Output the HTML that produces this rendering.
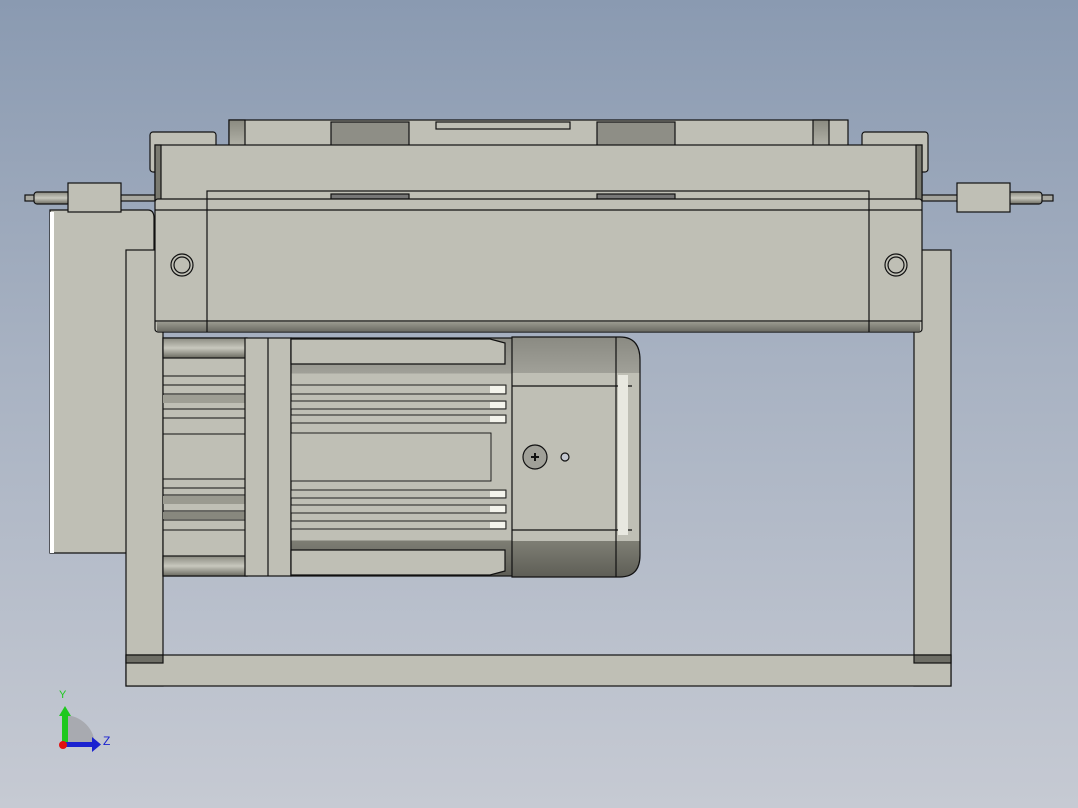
<!DOCTYPE html>
<html><head><meta charset="utf-8"><style>
html,body{margin:0;padding:0;}
body{width:1078px;height:808px;overflow:hidden;background:linear-gradient(#8a9ab1 0%,#a8b2c2 45%,#c6cad3 100%);}
svg{display:block}
</style></head><body>
<svg width="1078" height="808" viewBox="0 0 1078 808" xmlns="http://www.w3.org/2000/svg">
<defs>
<linearGradient id="cyl" x1="0" y1="0" x2="0" y2="1"><stop offset="0" stop-color="#8a8a80"/><stop offset=".5" stop-color="#c8c8be"/><stop offset="1" stop-color="#6a6a60"/></linearGradient>
<linearGradient id="cap" x1="0" y1="0" x2="0" y2="1"><stop offset="0" stop-color="#8a8a82"/><stop offset=".15" stop-color="#a0a098"/><stop offset=".15" stop-color="#bfbfb5"/><stop offset=".85" stop-color="#bfbfb5"/><stop offset=".85" stop-color="#7e7e74"/><stop offset="1" stop-color="#5e5e56"/></linearGradient>
<linearGradient id="gv" x1="0" y1="0" x2="0" y2="1"><stop offset="0" stop-color="#9a9a90"/><stop offset="1" stop-color="#6e6e66"/></linearGradient>
</defs>
<g stroke="#111" stroke-width="1.2" fill="#bfbfb5">
<!-- rods -->
<rect x="25" y="195" width="135" height="6" fill="#a8a8a0"/>
<rect x="918" y="195" width="135" height="6" fill="#a8a8a0"/>
<rect x="34" y="192" width="36" height="12" rx="3" fill="url(#cyl)"/>
<rect x="1006" y="192" width="36" height="12" rx="3" fill="url(#cyl)"/>
<!-- back panel -->
<path d="M50 210 H148 Q154 210 154 218 V553 H50 Z"/>
<rect x="50" y="212" width="4" height="341" fill="#fff" stroke="none"/>
<!-- blocks -->
<rect x="68" y="183" width="53" height="29"/>
<rect x="957" y="183" width="53" height="29"/>
<!-- legs -->
<rect x="126" y="250" width="37" height="436"/>
<rect x="914" y="250" width="37" height="436"/>
<rect x="126" y="655" width="825" height="31"/>
<rect x="126" y="655" width="37" height="8" fill="#6e6e66"/>
<rect x="914" y="655" width="37" height="8" fill="#6e6e66"/>
<!-- top rail -->
<rect x="229" y="120" width="619" height="27"/>
<rect x="229" y="120" width="16" height="80" fill="url(#cyl)"/>
<rect x="813" y="120" width="16" height="80" fill="url(#cyl)"/>
<rect x="331" y="122" width="78" height="24" fill="#8e8e86"/>
<rect x="597" y="122" width="78" height="24" fill="#8e8e86"/>
<rect x="436" y="122" width="134" height="7"/>
<!-- tabs -->
<rect x="150" y="132" width="66" height="40" rx="3"/>
<rect x="862" y="132" width="66" height="40" rx="3"/>
<!-- upper box -->
<rect x="155" y="145" width="767" height="55"/>
<rect x="155" y="145" width="6" height="55" fill="#7a7a70"/>
<rect x="916" y="145" width="6" height="55" fill="#7a7a70"/>
<rect x="207" y="191" width="662" height="9"/>
<rect x="331" y="194" width="78" height="5" fill="#777"/>
<rect x="597" y="194" width="78" height="5" fill="#777"/>
<!-- lower beam -->
<rect x="155" y="199" width="767" height="133" rx="3"/>
<line x1="155" y1="210" x2="922" y2="210"/>
<line x1="155" y1="321" x2="922" y2="321"/>
<rect x="157" y="322" width="763" height="9" fill="url(#gv)" stroke="none"/>
<line x1="207" y1="199" x2="207" y2="332"/>
<line x1="869" y1="199" x2="869" y2="332"/>
<circle cx="182" cy="265" r="11"/><circle cx="182" cy="265" r="8"/>
<circle cx="896" cy="265" r="11"/><circle cx="896" cy="265" r="8"/>
<!-- motor body -->
<rect x="163" y="338" width="84" height="238" fill="#bfbfb5"/>
<rect x="163" y="338" width="84" height="20" fill="url(#cyl)"/>
<rect x="163" y="556" width="84" height="20" fill="url(#cyl)"/>
<g stroke-width="0.9">
<line x1="163" y1="376" x2="247" y2="376"/><line x1="163" y1="385" x2="247" y2="385"/>
<line x1="163" y1="394" x2="247" y2="394"/><line x1="163" y1="409" x2="247" y2="409"/>
<line x1="163" y1="418" x2="247" y2="418"/><line x1="163" y1="434" x2="247" y2="434"/>
<line x1="163" y1="479" x2="247" y2="479"/><line x1="163" y1="488" x2="247" y2="488"/>
<line x1="163" y1="495" x2="247" y2="495"/><line x1="163" y1="511" x2="247" y2="511"/>
<line x1="163" y1="520" x2="247" y2="520"/><line x1="163" y1="530" x2="247" y2="530"/>
</g>
<rect x="163" y="395" width="84" height="8" fill="#9e9e94" stroke="none"/>
<rect x="163" y="496" width="84" height="8" fill="#9a9a90" stroke="none"/>
<rect x="163" y="512" width="84" height="7" fill="#88887e" stroke="none"/>
<!-- flange -->
<rect x="245" y="338" width="46" height="238"/>
<line x1="268" y1="338" x2="268" y2="576"/>
<rect x="291" y="338" width="222" height="238" fill="url(#cap)"/>
<path d="M291 339 H490 L505 343 V364 H291 Z"/>
<path d="M291 575 H490 L505 571 V550 H291 Z"/>
<g stroke-width="0.9">
<rect x="291" y="385" width="215" height="9"/><rect x="291" y="401" width="215" height="8"/><rect x="291" y="415" width="215" height="8"/>
<rect x="291" y="433" width="200" height="48"/>
<rect x="291" y="490" width="215" height="8"/><rect x="291" y="505" width="215" height="8"/><rect x="291" y="521" width="215" height="8"/>
</g>
<g fill="#f4f4ec" stroke="none">
<rect x="490" y="386" width="15" height="7"/><rect x="490" y="402" width="15" height="6"/><rect x="490" y="416" width="15" height="6"/>
<rect x="490" y="491" width="15" height="6"/><rect x="490" y="506" width="15" height="6"/><rect x="490" y="522" width="15" height="6"/>
</g>
<!-- end cap -->
<path d="M512 337 H620 Q640 337 640 360 V555 Q640 577 620 577 H512 Z" fill="url(#cap)"/>
<line x1="512" y1="386" x2="632" y2="386"/>
<line x1="512" y1="530" x2="632" y2="530"/>
<line x1="616" y1="337" x2="616" y2="577"/>
<rect x="618" y="375" width="10" height="160" fill="#e8e8e0" stroke="none"/>
<circle cx="535" cy="457" r="12" fill="#a0a098"/>
<path d="M531 457 H539 M535 453 V461" stroke-width="2"/>
<circle cx="565" cy="457" r="4" fill="#c4c8d0"/>
</g>
<!-- triad -->
<path d="M64 715 A31 31 0 0 1 95 746 L64 746 Z" fill="#a8aab0"/>
<rect x="62" y="712" width="6" height="34" fill="#1ec81e"/>
<path d="M59 716 L65 706 L71 716 Z" fill="#1ec81e"/>
<rect x="64" y="742" width="30" height="5" fill="#1a22d0"/>
<path d="M92 737 L101 744.5 L92 752 Z" fill="#1a22d0"/>
<circle cx="63" cy="745" r="4" fill="#e01010"/>
<text x="59" y="698" font-family="Liberation Sans, sans-serif" font-size="11" fill="#1ec81e">Y</text>
<text x="103" y="745" font-family="Liberation Sans, sans-serif" font-size="12" fill="#1a22d0">Z</text>
</svg>
</body></html>
